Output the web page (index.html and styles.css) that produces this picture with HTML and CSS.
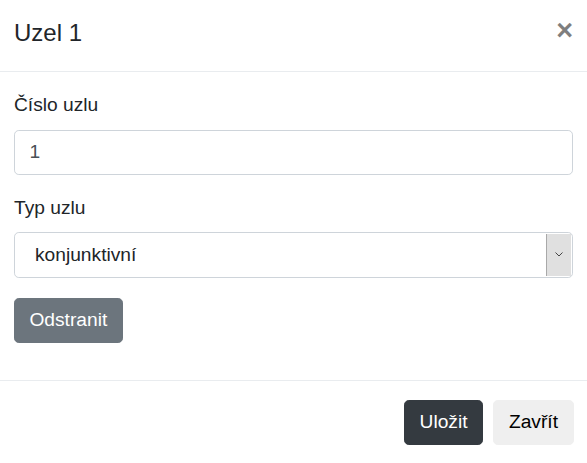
FILE: index.html
```html
<!DOCTYPE html>
<html lang="cs">
<head>
<meta charset="utf-8">
<title>Uzel 1</title>
<link rel="stylesheet" href="styles.css">
</head>
<body>
<div class="modal">
  <div class="modal-header">
    <h5 class="modal-title">Uzel 1</h5>
    <button class="close" type="button" aria-label="Close">×</button>
  </div>
  <div class="modal-body">
    <div class="form-group">
      <label class="label" for="cislo">Číslo uzlu</label>
      <input class="form-control" id="cislo" type="text" value="1">
    </div>
    <div class="form-group">
      <label class="label" for="typ">Typ uzlu</label>
      <div class="select">
        <span class="select-text">konjunktivní</span>
        <span class="select-arrow">
          <svg width="8" height="5" viewBox="0 0 8 5"><path d="M0.5 0.5 L4 4 L7.5 0.5" fill="none" stroke="#444" stroke-width="1"/></svg>
        </span>
      </div>
    </div>
    <div class="form-group form-actions">
      <button class="btn btn-secondary" type="button">Odstranit</button>
    </div>
  </div>
  <div class="modal-footer">
    <button class="btn btn-dark" type="button">Uložit</button>
    <button class="btn btn-light" type="button">Zavřít</button>
  </div>
</div>
</body>
</html>
```
FILE: styles.css
```css
html, body {
  margin: 0;
  padding: 0;
  background: #fff;
}
body {
  font-family: "Liberation Sans", Arial, sans-serif;
  font-size: 19.2px;
  line-height: 1.5;
  color: #212529;
}
.modal {
  width: 587px;
}
.modal-header {
  display: flex;
  justify-content: space-between;
  align-items: flex-start;
  padding: 15px 14px 20px 14px;
  border-bottom: 1px solid #e9ecef;
}
.modal-title {
  margin: 0;
  font-size: 24px;
  font-weight: 400;
  line-height: 36px;
}
.close {
  background: none;
  border: 0;
  padding: 0;
  margin: 1px 0 0 0;
  font-family: "Liberation Sans", Arial, sans-serif;
  font-size: 28.8px;
  font-weight: 700;
  line-height: 28.8px;
  color: #000;
  opacity: 0.5;
}
.modal-body {
  padding: 19.2px 14px 17.6px 14px;
}
.form-group {
  display: flex;
  flex-direction: column;
  align-items: stretch;
  margin-bottom: 19.2px;
}
.form-actions {
  align-items: flex-start;
  padding-top: 1px;
}
.label {
  line-height: 28.8px;
  margin-bottom: 9.6px;
}
.form-control {
  box-sizing: border-box;
  height: 45.2px;
  padding: 7.2px 14.4px;
  font-family: "Liberation Sans", Arial, sans-serif;
  font-size: 19.2px;
  color: #495057;
  border: 1px solid #ced4da;
  border-radius: 4.8px;
  outline: none;
}
.select {
  box-sizing: border-box;
  height: 45.2px;
  display: flex;
  align-items: stretch;
  border: 1px solid #ced4da;
  border-radius: 4.8px;
  overflow: hidden;
}
.select-text {
  flex: 1;
  display: flex;
  align-items: center;
  padding-left: 20px;
  color: #212529;
}
.select-arrow {
  width: 24px;
  margin: 1px 1px 1px 0;
  display: flex;
  align-items: center;
  justify-content: center;
  background: #e0e0e0;
  border-left: 1px solid #a9a9a9;
}
.btn {
  box-sizing: border-box;
  height: 45.2px;
  padding: 0 14.4px;
  font-family: "Liberation Sans", Arial, sans-serif;
  font-size: 19.2px;
  line-height: 1.5;
  border: 1px solid transparent;
  border-radius: 4.8px;
}
.btn-secondary {
  background: #6c757d;
  border-color: #6c757d;
  color: #fff;
}
.modal-footer {
  display: flex;
  justify-content: flex-end;
  gap: 10px;
  padding: 19px 13px 16px 14px;
  border-top: 1px solid #e9ecef;
}
.btn-dark {
  background: #343a40;
  border-color: #343a40;
  color: #fff;
}
.btn-light {
  background: #efefef;
  border-color: #efefef;
  color: #000;
  padding: 0 15px;
}
```
